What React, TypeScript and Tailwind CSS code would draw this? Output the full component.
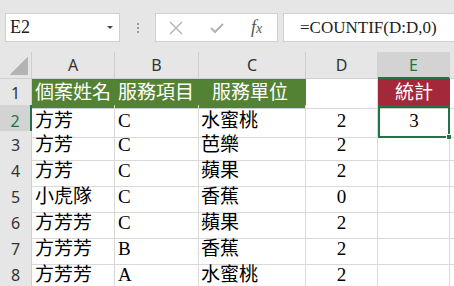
import React from "react";

const rows = [
  ["方芳", "C", "水蜜桃", "2"],
  ["方芳", "C", "芭樂", "2"],
  ["方芳", "C", "蘋果", "2"],
  ["小虎隊", "C", "香蕉", "0"],
  ["方芳芳", "C", "蘋果", "2"],
  ["方芳芳", "B", "香蕉", "2"],
  ["方芳芳", "A", "水蜜桃", "2"],
];

const cjk = { fontFamily: '"Liberation Serif", "Noto Sans CJK TC", serif' };
const ui = { fontFamily: '"Noto Sans", "Liberation Sans", sans-serif' };

const gridCols = "grid grid-cols-[32px_83px_84px_107px_72px_72px_1fr]";

const App = () => {
  return (
    <div className="w-[454px] h-[286px] overflow-hidden bg-white" style={ui}>
      {/* formula bar */}
      <div className="h-[52px] bg-[#e6e6e6] flex items-start pt-[13px]">
        <div className="ml-[5px] w-[115px] h-[29px] bg-white border border-[#d0d0d0] flex items-center justify-between pl-[4px] pr-[6px]">
          <span className="text-[18px] text-[#222]" style={cjk}>
            E2
          </span>
          <span className="w-0 h-0 border-l-[3px] border-r-[3px] border-t-[3px] border-l-transparent border-r-transparent border-t-[#444]" />
        </div>
        <div className="w-[35px] h-[29px] flex flex-col items-center justify-center gap-[2px]">
          <span className="w-[2px] h-[2px] bg-[#9a9a9a]" />
          <span className="w-[2px] h-[2px] bg-[#9a9a9a]" />
          <span className="w-[2px] h-[2px] bg-[#9a9a9a]" />
        </div>
        <div className="w-[123px] h-[29px] bg-white border border-[#d0d0d0] flex items-center">
          <svg width="14" height="14" viewBox="0 0 14 14" className="ml-[13px]">
            <path d="M1 1 L13 13 M13 1 L1 13" stroke="#b3b3b3" strokeWidth="1.4" fill="none" />
          </svg>
          <svg width="14" height="12" viewBox="0 0 14 12" className="ml-[27px]">
            <path d="M1 6 L5 10 L13 2" stroke="#b3b3b3" strokeWidth="2" fill="none" />
          </svg>
          <span className="ml-[27px] text-[18px] italic text-[#555]" style={cjk}>
            f<span className="text-[14px]">x</span>
          </span>
        </div>
        <div className="ml-[5px] flex-1 h-[29px] bg-white border border-[#d0d0d0] border-r-0 flex items-center pl-[16px]">
          <span className="text-[17px] text-[#222]" style={cjk}>
            =COUNTIF(D:D,0)
          </span>
        </div>
      </div>

      {/* column headers */}
      <div className={`${gridCols} h-[27px] bg-[#e6e6e6] text-[16px] text-[#333]`}>
        <div className="border-r border-b border-[#cfcfcf] flex items-end justify-end pr-[3px] pb-[3px]">
          <div className="w-[19px] h-[19px] shrink-0 bg-[linear-gradient(to_bottom_right,transparent_50%,#b4b4b4_50%)]" />
        </div>
        {["A", "B", "C", "D"].map((c) => (
          <div key={c} className="border-r border-b border-[#cfcfcf] flex items-center justify-center">
            {c}
          </div>
        ))}
        <div className="bg-[#d3d3d3] border-r border-[#cfcfcf] border-b-2 border-b-[#217346] flex items-center justify-center text-[#217346]">
          E
        </div>
        <div className="border-b border-[#cfcfcf]" />
      </div>

      {/* row 1 */}
      <div className={`${gridCols} h-[26px] text-[19px]`} style={cjk}>
        <div className="bg-[#e6e6e6] border-r border-b border-[#cfcfcf] flex items-center justify-center text-[16px] text-[#333]" style={ui}>
          1
        </div>
        <div className="bg-[#548235] text-white border-b border-[#cfcfcf] flex items-center pl-[3px] whitespace-nowrap">
          個案姓名
        </div>
        <div className="bg-[#548235] text-white border-b border-[#cfcfcf] flex items-center pl-[3px] whitespace-nowrap">
          服務項目
        </div>
        <div className="bg-[#548235] text-white border-b border-[#cfcfcf] flex items-center pl-[13px] whitespace-nowrap">
          服務單位
        </div>
        <div className="border-r border-b border-[#d9d9d9]" />
        <div className="bg-[#a3283a] text-white border-b border-[#cfcfcf] flex items-center justify-center">
          統計
        </div>
        <div className="border-b border-[#d9d9d9]" />
      </div>

      {rows.map((r, i) => (
        <div key={i} className={`${gridCols} h-[26px] text-[19px] text-black`} style={cjk}>
          <div
            className={`${
              i === 0 ? "bg-[#d3d3d3] border-r-2 border-r-[#217346] text-[#217346]" : "bg-[#e6e6e6] border-r border-[#cfcfcf] text-[#333]"
            } border-b border-b-[#cfcfcf] flex items-center justify-center text-[16px]`}
            style={ui}
          >
            {i + 2}
          </div>
          <div className="border-r border-b border-[#d9d9d9] flex items-center pl-[3px] whitespace-nowrap">{r[0]}</div>
          <div className="border-r border-b border-[#d9d9d9] flex items-center pl-[3px]">{r[1]}</div>
          <div className="border-r border-b border-[#d9d9d9] flex items-center pl-[2px] whitespace-nowrap">{r[2]}</div>
          <div className="border-r border-b border-[#d9d9d9] flex items-center justify-center">{r[3]}</div>
          {i === 0 ? (
            <div className="relative border-2 border-[#217346] flex items-center justify-center">
              3
              <span className="absolute -right-[4px] -bottom-[4px] w-[6px] h-[6px] bg-[#217346] border border-white" />
            </div>
          ) : (
            <div className="border-r border-b border-[#d9d9d9]" />
          )}
          <div className="border-b border-[#d9d9d9]" />
        </div>
      ))}
    </div>
  );
};

export default App;
